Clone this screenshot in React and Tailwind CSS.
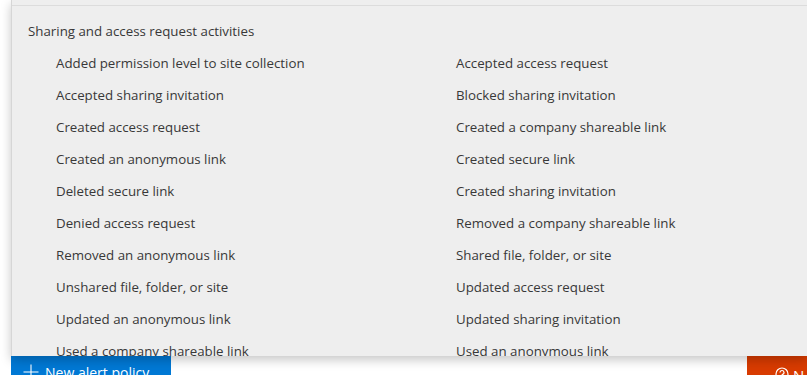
import React from "react";

const left = [
  "Added permission level to site collection",
  "Accepted sharing invitation",
  "Created access request",
  "Created an anonymous link",
  "Deleted secure link",
  "Denied access request",
  "Removed an anonymous link",
  "Unshared file, folder, or site",
  "Updated an anonymous link",
  "Used a company shareable link",
];
const right = [
  "Accepted access request",
  "Blocked sharing invitation",
  "Created a company shareable link",
  "Created secure link",
  "Created sharing invitation",
  "Removed a company shareable link",
  "Shared file, folder, or site",
  "Updated access request",
  "Updated sharing invitation",
  "Used an anonymous link",
];

export default function App() {
  const items = [];
  for (let i = 0; i < left.length; i++) {
    items.push(left[i]);
    items.push(right[i]);
  }
  return (
    <div
      className="relative w-[807px] h-[375px] overflow-hidden bg-white"
      style={{ fontFamily: '"Open Sans", "Noto Sans", sans-serif' }}
    >
      <div className="flex justify-between items-start pt-[355px]">
        <div className="ml-[11px] w-[160px] h-[30px] bg-[#0078d4] flex items-start pt-[9px] pl-[12px] gap-[6px] text-white text-[14px]">
          <svg width="16" height="16" viewBox="0 0 16 16" className="mt-[0px] shrink-0">
            <path d="M8 0.5v15M0.5 8h15" stroke="white" strokeWidth="1.1" fill="none" />
          </svg>
          <span className="leading-[20px] -mt-[1px]">New alert policy</span>
        </div>
        <div className="w-[60px] h-[30px] bg-[#d83b01] flex items-start pt-[12px] pl-[28px] gap-[4px] text-white text-[15px]">
          <svg width="14" height="14" viewBox="0 0 14 14" className="shrink-0">
            <circle cx="7" cy="7" r="6" stroke="white" strokeWidth="1.2" fill="none" />
            <path d="M5 5.5a2 2 0 1 1 2.6 1.9c-.4.2-.6.5-.6.9V9" stroke="white" strokeWidth="1.2" fill="none" />
          </svg>
          <span className="leading-[16px]">N</span>
        </div>
      </div>

      <div className="absolute left-[11px] top-0 right-0 h-[356px] bg-[#eeeeee] border-l border-[#d6d6d6] shadow-[0_4px_10px_rgba(0,0,0,0.22)] overflow-hidden">
        <div className="h-[5px]" />
        <div className="border-t border-[#dcdcdc] pt-[10px] text-[#383838] text-[13.3px]">
          <div className="pl-[16px] h-[32px] flex items-center">Sharing and access request activities</div>
          <div className="grid grid-cols-[400px_1fr] pl-[44px]">
            {items.map((t, i) => (
              <div key={i} className="h-[32px] flex items-center whitespace-nowrap">
                {t}
              </div>
            ))}
          </div>
        </div>
      </div>
    </div>
  );
}
